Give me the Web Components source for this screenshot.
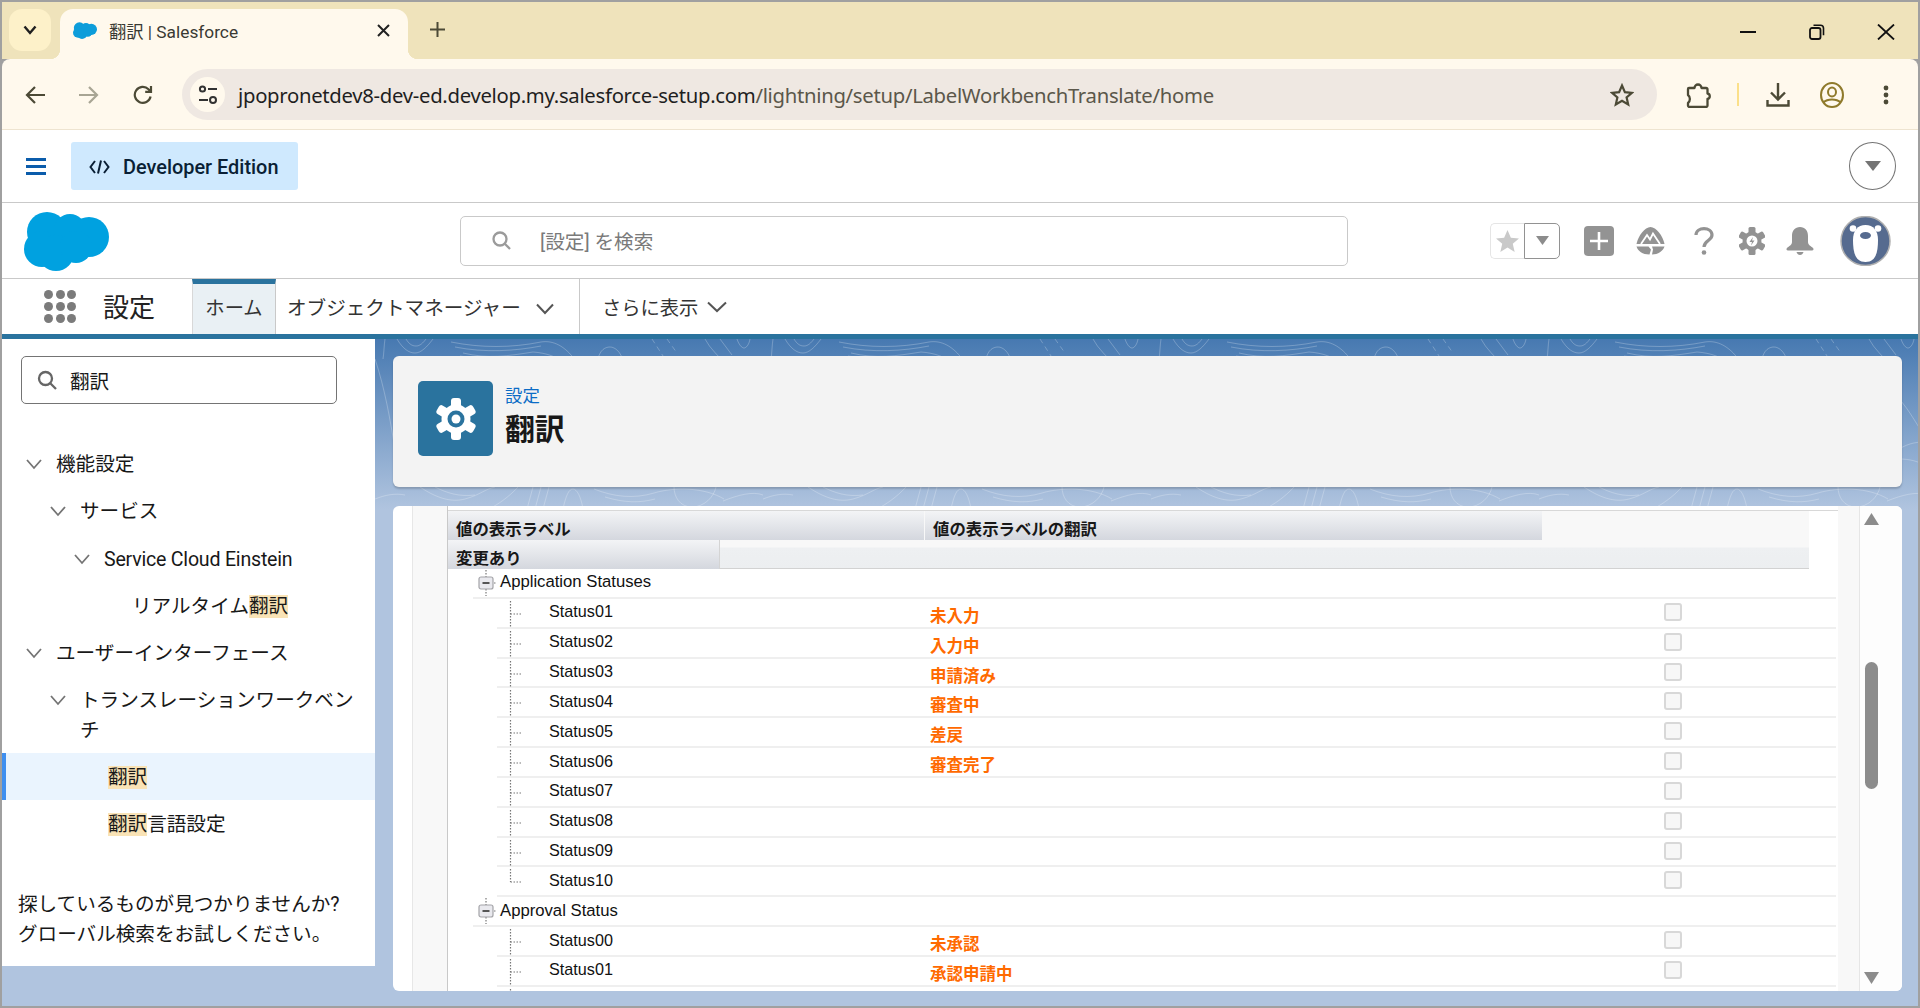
<!DOCTYPE html>
<html lang="ja">
<head>
<meta charset="utf-8">
<title>翻訳 | Salesforce</title>
<style>
  html, body { margin: 0; height: 100%; background: #a0a0a0; }
  body { font-family: Roboto, "Noto Sans CJK JP", sans-serif; color: #181818; overflow: hidden; }
</style>
</head>
<body>
<browser-frame>
  <browser-tabs></browser-tabs>
  <browser-toolbar></browser-toolbar>
  <sf-appbar></sf-appbar>
  <sf-header></sf-header>
  <sf-nav></sf-nav>
  <setup-body>
    <setup-sidebar slot="side"></setup-sidebar>
    <page-head></page-head>
    <label-table></label-table>
  </setup-body>
</browser-frame>

<script>
// every element is just a template in an open shadow root
function define(tag, html, init) {
  const tpl = document.createElement('template');
  tpl.innerHTML = html;
  customElements.define(tag, class extends HTMLElement {
    constructor() {
      super();
      this.attachShadow({ mode: 'open' }).appendChild(tpl.content.cloneNode(true));
      this.ready = false;
    }
    connectedCallback() {
      if (init && !this.ready) { this.ready = true; init(this, this.shadowRoot); }
    }
  });
}

const cloud = `<circle cx="23" cy="21" r="20"/><circle cx="46" cy="19" r="16"/><circle cx="65" cy="26" r="20"/><circle cx="18" cy="38" r="18"/><circle cx="32" cy="42" r="18"/><circle cx="52" cy="36" r="16"/>`;

define('browser-frame', `
<style>
  :host { display: flex; flex-direction: column; box-sizing: border-box; height: 1008px; padding: 2px; background: #a0a0a0; }
</style>
<slot></slot>`);

define('browser-tabs', `
<style>
  :host { display: flex; height: 57px; box-sizing: border-box; padding: 7px 0 0 7px; background: #efe3bb; align-items: flex-start; color: #1f1f1f; }
  .list { width: 42px; height: 42px; border-radius: 13px; background: #fdf1c9; display: flex; align-items: center; justify-content: center; }
  .tab { position: relative; box-sizing: border-box; width: 348px; height: 50px; margin-left: 9px; border-radius: 13px 13px 0 0; background: #fff9ed; display: flex; align-items: center; padding: 0 18px 7px 13px; font-size: 17.300px; color: #3a3a33; }
  .tab::before, .tab::after { content: ""; position: absolute; bottom: 0; width: 10px; height: 10px; }
  .tab::before { left: -10px; background: radial-gradient(circle at 0 0, transparent 10px, #fff9ed 10.5px); }
  .tab::after { right: -10px; background: radial-gradient(circle at 100% 0, transparent 10px, #fff9ed 10.5px); }
  .tab span { flex: 1; margin-left: 12px; }
  .plus { margin-left: 22px; margin-top: 13px; }
  .win { margin-left: auto; display: flex; align-items: center; padding-right: 23px; height: 45px; }
</style>
<div class="list"><svg width="14" height="10" viewBox="0 0 14 10"><path d="M1.5 1.5 7 8l5.5-6.5" fill="none" stroke="#1f1f1f" stroke-width="2.4"/></svg></div>
<div class="tab">
  <svg width="24" height="17" viewBox="0 0 85 60" fill="#0d9dda">${cloud}</svg>
  <span>翻訳 | Salesforce</span>
  <svg width="13" height="13" viewBox="0 0 13 13"><path d="M1 1l11 11M12 1L1 12" stroke="#222" stroke-width="2"/></svg>
</div>
<svg class="plus" width="15" height="15" viewBox="0 0 15 15"><path d="M7.5 0v15M0 7.5h15" stroke="#4c4a36" stroke-width="2"/></svg>
<div class="win">
  <svg width="16" height="4" viewBox="0 0 16 4" style="margin-right:53px"><path d="M0 2h16" stroke="#111" stroke-width="2"/></svg>
  <svg width="16" height="16" viewBox="0 0 16 16" style="margin-right:52px"><rect x="1" y="4" width="10.5" height="11" rx="2" fill="none" stroke="#111" stroke-width="1.8"/><path d="M4.5 1.2h7a3 3 0 0 1 3 3v7" fill="none" stroke="#111" stroke-width="1.6"/></svg>
  <svg width="18" height="16" viewBox="0 0 18 16"><path d="M1 0.5l16 15M17 0.5l-16 15" stroke="#111" stroke-width="1.8"/></svg>
</div>`);

define('browser-toolbar', `
<style>
  :host { display: flex; height: 71px; box-sizing: border-box; padding: 10px 0 9px 23px; background: #fff9ed; border-bottom: 1px solid #eee4d0; border-radius: 8px 8px 0 0; align-items: center; color: #4c4a36; }
  svg { flex: none; }
  .omni { box-sizing: border-box; width: 1475px; height: 51px; margin-left: 29px; border-radius: 26px; background: #efe8e2; display: flex; align-items: center; padding: 0 23px 0 8px; font-size: 20.3px; white-space: nowrap; }
  .tune { width: 35px; height: 35px; border-radius: 50%; background: #fff9ed; display: flex; align-items: center; justify-content: center; margin-right: 13px; flex: none; }
  .url { flex: 1; color: #1f1f1f; font-family: "Noto Sans", "Noto Sans CJK JP", sans-serif; letter-spacing: -.29px; }
  .url i { font-style: normal; color: #5b574a; }
  .sep { width: 2px; height: 23px; background: #fbe08a; margin: 0 27px 0 26px; }
</style>
<svg width="21" height="20" viewBox="0 0 21 20"><path d="M20 10H3M10 2l-8 8 8 8" fill="none" stroke="#4c4a36" stroke-width="2.2"/></svg>
<svg width="21" height="20" viewBox="0 0 21 20" style="margin-left:32px"><path d="M1 10h17M11 2l8 8-8 8" fill="none" stroke="#a8a594" stroke-width="2.2"/></svg>
<svg width="20" height="20" viewBox="0 0 20 20" style="margin-left:34px"><path d="M17.6 11.5A8 8 0 1 1 15.5 4.2L18 6.6M18 1v5.8h-5.8" fill="none" stroke="#4c4a36" stroke-width="2.2"/></svg>
<div class="omni">
  <div class="tune"><svg width="20" height="20" viewBox="0 0 20 20" fill="none" stroke="#333" stroke-width="2"><circle cx="4.5" cy="4" r="2.6"/><path d="M10 4h9M1 15h9"/><circle cx="15" cy="15" r="3"/></svg></div>
  <span class="url">jpopronetdev8-dev-ed.develop.my.salesforce-setup.com<i>/lightning/setup/LabelWorkbenchTranslate/home</i></span>
  <svg width="24" height="24" viewBox="0 0 24 24"><path d="M12 2.5l2.9 6.6 7.1.7-5.4 4.7 1.6 7-6.2-3.7-6.2 3.7 1.6-7L2 9.8l7.1-.7z" fill="none" stroke="#4c4a36" stroke-width="2.2"/></svg>
</div>
<svg width="25" height="26" viewBox="0 0 25 26" style="margin-left:29px"><path d="M3 6h5.500a3.500 3.500 0 0 1 7 0H20a1.500 1.500 0 0 1 1.500 1.500v4a2.800 2.800 0 0 1 0 5.500V23.500a1.500 1.500 0 0 1-1.500 1.500H3.500a1.500 1.500 0 0 1-1.500-1.500V21c2.500-2 2.500-6 0-8V7a1 1 0 0 1 1-1z" fill="none" stroke="#4c4a36" stroke-width="2.300" stroke-linejoin="round"/></svg>
<div class="sep"></div>
<svg width="24" height="25" viewBox="0 0 24 25"><path d="M12 1v16M5 10.500l7 7 7-7M1.500 18v5.500h21V18" fill="none" stroke="#4c4a36" stroke-width="2.400"/></svg>
<svg width="24" height="26" viewBox="0 0 24 26" style="margin-left:30px" fill="none" stroke="#8f7a2b" stroke-width="2"><ellipse cx="12" cy="13" rx="11" ry="12"/><ellipse cx="12" cy="10" rx="4" ry="4.500"/><path d="M3.500 20.500c4-4 13-4 17 0"/></svg>
<svg width="6" height="20" viewBox="0 0 6 20" style="margin-left:39px" fill="#4c4a36"><circle cx="3" cy="3" r="2.400"/><circle cx="3" cy="10" r="2.400"/><circle cx="3" cy="17" r="2.400"/></svg>`);

define('sf-appbar', `
<style>
  :host { display: flex; height: 73px; box-sizing: border-box; border-bottom: 1px solid #c9c9c9; background: #fff; align-items: center; padding: 0 22px 0 24px; }
  .menu { width: 20px; height: 17px; }
  .edition { display: flex; align-items: center; width: 227px; height: 48px; box-sizing: border-box; margin-left: 25px; padding: 2px 0 0 18px; background: #cfe9fe; border-radius: 3px; font-size: 19.900px; font-weight: 500; color: #0a1f35; }
  .edition svg { margin-right: 13px; }
  .drop { margin-left: auto; width: 47px; height: 48px; box-sizing: border-box; border: 1px solid #747474; border-radius: 50%; display: flex; align-items: center; justify-content: center; }
</style>
<svg class="menu" viewBox="0 0 20 17" fill="#0b5cab"><rect width="20" height="3"/><rect y="7" width="20" height="3"/><rect y="14" width="20" height="3"/></svg>
<div class="edition"><svg width="21" height="14" viewBox="0 0 21 14" fill="none" stroke="#0a1f35" stroke-width="2"><path d="M6 1L1.500 7 6 13M15 1l4.500 6-4.500 6M12 0.500L9 13.500"/></svg>Developer Edition</div>
<div class="drop"><svg width="16" height="10" viewBox="0 0 16 10"><path d="M0 0h16l-8 10z" fill="#747474"/></svg></div>`);

const gearTeeth = [0, 60, 120, 180, 240, 300];

define('sf-header', `
<style>
  :host { display: flex; height: 76px; box-sizing: border-box; border-bottom: 1px solid #c9c9c9; background: #fff; align-items: center; padding-left: 22px; }
  .logo { flex: none; }
  .search { box-sizing: border-box; width: 888px; height: 50px; margin-left: 351px; border: 1px solid #c9c9c9; border-radius: 5px; display: flex; align-items: center; padding-left: 31px; color: #7a7a7a; font-size: 19.600px; }
  .search svg { margin-right: 29px; }
  .fav { display: flex; width: 70px; height: 36px; margin-left: 142px; box-sizing: border-box; }
  .fav div { display: flex; align-items: center; justify-content: center; box-sizing: border-box; height: 36px; }
  .fav .star { width: 34px; border: 1px solid #e5e5e5; border-right: 0; border-radius: 5px 0 0 5px; }
  .fav .arr { width: 36px; border: 1px solid #929292; border-left-color: #929292; border-radius: 0 5px 5px 0; }
  .ic { flex: none; }
  .avatar { margin-left: 26px; flex: none; }
</style>
<svg class="logo" width="85" height="60" viewBox="0 0 85 60" fill="#00a1e0">${cloud}</svg>
<div class="search"><svg width="19" height="19" viewBox="0 0 19 19" fill="none" stroke="#9b9b9b" stroke-width="2.300"><circle cx="8" cy="8" r="6.500"/><path d="M12.500 12.500l5.500 5.500"/></svg><span>[設定] を検索</span></div>
<div class="fav">
  <div class="star"><svg width="23" height="22" viewBox="0 0 24 23"><path d="M12 0l3.500 8 8.500.8-6.500 5.600 2 8.600L12 18.400 4.500 23l2-8.600L0 8.800 8.500 8z" fill="#c9c9c9"/></svg></div>
  <div class="arr"><svg width="13" height="9" viewBox="0 0 13 9"><path d="M0 0h13L6.500 9z" fill="#8c8c8c"/></svg></div>
</div>
<svg class="ic" style="margin-left:24px" width="30" height="30" viewBox="0 0 30 30"><rect width="30" height="30" rx="4" fill="#939393"/><path d="M15 6v18M6 15h18" stroke="#fff" stroke-width="2.600"/></svg>
<svg class="ic" style="margin-left:22px" width="29" height="28" viewBox="0 0 29 28"><path d="M14.500 0C20 0 27 9 28.500 17H.5C2 9 9 0 14.500 0z" fill="#939393"/><path d="M.5 19.500h12l2.500 3-1.500 5C6.500 27.500 2 24 .5 19.500zM16 19.500h12.500C27 24 22 27.500 16 27.500l1-5z" fill="#939393"/><path d="M5 17l6-9 3 4.500 3-6L24 17" fill="none" stroke="#fff" stroke-width="1.800"/></svg>
<svg class="ic" style="margin-left:29px" width="20" height="28" viewBox="0 0 20 28"><path d="M2 8C2-.5 18-.5 18 8c0 5.500-8 5.500-8 12" fill="none" stroke="#939393" stroke-width="3.200"/><circle cx="10" cy="25.500" r="2.300" fill="#939393"/></svg>
<svg class="ic" style="margin-left:25px" width="26" height="28" viewBox="-13 -14 26 28"><g fill="#939393">${gearTeeth.map(a => `<rect x="-3.500" y="-14" width="7" height="8" rx="1.500" transform="rotate(${a})"/>`).join('')}<circle r="9.500"/></g><circle r="5.500" fill="#fff"/><path d="M1-4L-2.500 1H0L-1 4.500 2.500-.5H0z" fill="#939393"/></svg>
<svg class="ic" style="margin-left:21px" width="28" height="28" viewBox="0 0 28 28" fill="#939393"><path d="M14 0c5 0 8 3.500 8 9v6c0 3 3 4 5 6 1 1 .5 2.500-1 2.500H2C.5 23.500 0 22 1 21c2-2 5-3 5-6V9c0-5.500 3-9 8-9z"/><path d="M10.500 25h7c-.5 2-2 3-3.500 3s-3-1-3.500-3z"/></svg>
<svg class="avatar" width="51" height="50" viewBox="0 0 51 50"><circle cx="25.500" cy="25" r="24.500" fill="#566b8f" stroke="#b0b0b0" stroke-width="1.500"/><circle cx="13" cy="12.500" r="3.300" fill="#fff"/><circle cx="38" cy="12.500" r="3.300" fill="#fff"/><path d="M25.500 9c8 0 12.500 6 12.500 15 0 12-2 22-12.500 22S13 36 13 24c0-9 4.500-15 12.500-15z" fill="#fff"/><ellipse cx="25.500" cy="19.500" rx="5.500" ry="3.500" fill="#566b8f"/></svg>`);

define('sf-nav', `
<style>
  :host { display: flex; height: 55px; background: #fff; align-items: stretch; padding-left: 42px; font-size: 19.600px; white-space: nowrap; }
  .apps { align-self: center; display: grid; grid-template-columns: repeat(3, 9px); gap: 3px 2.500px; }
  .apps i { width: 9px; height: 9px; border-radius: 50%; background: #7b7b7b; }
  .title { width: 89px; margin: -3px 0 0 27px; font-size: 26px; align-self: center; color: #222; }
  .home { box-sizing: border-box; width: 84px; display: flex; align-items: center; justify-content: center; padding-bottom: 5px; background: #e9f0f4; border-top: 5px solid #2a739e; border-left: 1px solid #d8d8d8; border-right: 1px solid #c9c9c9; color: #333; font-size: 19.300px; }
  .item { display: flex; align-items: center; color: #333; }
  .om { box-sizing: border-box; width: 304px; padding-left: 11px; border-right: 1px solid #c9c9c9; }
  .om svg { margin: 5px 0 0 15px; }
  .more { padding-left: 22px; font-size: 19.300px; }
  .more svg { margin-left: 9px; }
</style>
<div class="apps"><i></i><i></i><i></i><i></i><i></i><i></i><i></i><i></i><i></i></div>
<div class="title">設定</div>
<div class="home">ホーム</div>
<div class="item om">オブジェクトマネージャー<svg width="18" height="12" viewBox="0 0 18 12"><path d="M1 1.500l8 8.500 8-8.500" fill="none" stroke="#555" stroke-width="2"/></svg></div>
<div class="item more">さらに表示<svg width="20" height="12" viewBox="0 0 20 12"><path d="M1 1.500l9 8.500 9-8.500" fill="none" stroke="#555" stroke-width="2"/></svg></div>`);

define('setup-body', `
<style>
  :host { display: flex; flex: 1; min-height: 0; position: relative; border-top: 5px solid #2a739e; background: linear-gradient(#4779b1 0, #b0c4df 170px); }
  .side { width: 373px; flex: none; background: #b0c4df; position: relative; z-index: 1; }
  .main { flex: 1; position: relative; z-index: 1; min-width: 0; padding: 17px 16px 0 18px; display: flex; flex-direction: column; gap: 19px; }
  .topo { position: absolute; left: 373px; top: 0; width: calc(100% - 373px); height: 200px; }
</style>
<svg class="topo">
  <defs>
    <pattern id="topo" width="388" height="200" patternUnits="userSpaceOnUse">
      <g fill="none" stroke="#fff" stroke-opacity=".24" stroke-width="1">
        <path d="M22 0c6 10 12 14 18 14s12-6 18-14M31 0c3 5 6 7 10 7s7-3 10-7"/>
        <path d="M76 3c30 6 60 6 90 0 12-2 24 4 34 18M80 8c30 6 60 4 86-1M88 14c25 6 45 3 70-1 14 1 24 5 32 11"/>
        <path d="M223 20c2-9 7-12 12-12s11 5 13 14M330 0c5 10 15 18 20 25M345 0l12 16M362 0c2 6 5 9 7 9s5-3 6-9M8 20c1-6 1-14 2-20"/>
        <path d="M277 0l13 20M292 0l10 14M85 17l30 4" stroke-dasharray="5 4"/>
        <path d="M45 148c15 10 30 16 45 12s20-10 30-12M60 148c12 6 24 10 40 8M114 170c8-4 20-12 29-22"/>
        <path d="M152 170l6-22M160 170l6-22M168 170l6-22M188 170c3-14 6-20 10-20s8 8 10 20"/>
        <path d="M219 150c20 8 40 10 60 4s50-6 70 6M230 158c20 6 35 6 50 2M299 148c0 10 6 20 18 20s22-10 24-20M348 162c15-6 30-10 40-6M0 160c10-4 20-6 30-4"/>
        <path d="M360 60c10 10 20 30 28 40M360 110c10-6 20-8 28-6M360 120c10 0 20 2 28 8M0 20c10 30 15 60 20 90"/>
      </g>
    </pattern>
  </defs>
  <rect width="100%" height="200" fill="url(#topo)"/>
</svg>
<div class="side"><slot name="side"></slot></div>
<div class="main"><slot></slot></div>`);

// one row of the setup tree
define('tree-item', `
<style>
  :host { display: flex; box-sizing: border-box; padding: 10px 16px 7px var(--indent, 0); line-height: 30px; font-size: 19.600px; color: #181818; }
  :host([current]) { background: #eaf4fe; box-shadow: inset 4px 0 #3f8fef; }
  svg { flex: none; margin: 9px 14px 0 0; }
  ::slotted(mark) { background: #f9e3b6; color: inherit; }
</style>
<svg width="16" height="11" viewBox="0 0 16 11"><path d="M1 1l7 8 7-8" fill="none" stroke="#747474" stroke-width="1.800"/></svg>
<span><slot></slot></span>`, (el, root) => {
  el.style.setProperty('--indent', el.getAttribute('indent') + 'px');
  if (el.hasAttribute('leaf')) root.querySelector('svg').remove();
});

define('setup-sidebar', `
<style>
  :host { display: block; box-sizing: border-box; height: 627px; background: #fff; padding-top: 17px; font-size: 19.600px; }
  .find { box-sizing: border-box; width: 316px; height: 48px; margin-left: 19px; border: 1px solid #747474; border-radius: 5px; display: flex; align-items: center; padding-left: 15px; }
  .find svg { margin-right: 13px; }
  .tree { margin-top: 36.500px; }
  .help { margin: 43px 0 0 16px; line-height: 30px; }
  mark { background: #f9e3b6; color: inherit; }
</style>
<div class="find"><svg width="20" height="20" viewBox="0 0 20 20" fill="none" stroke="#666" stroke-width="2.300"><circle cx="8.500" cy="8.500" r="6.500"/><path d="M13 13l6 6"/></svg><span>翻訳</span></div>
<div class="tree">
  <tree-item indent="24" style="padding-top:9px;padding-bottom:8px">機能設定</tree-item>
  <tree-item indent="48" style="padding-top:9px;padding-bottom:8px">サービス</tree-item>
  <tree-item indent="72"><span style="letter-spacing:-.22px">Service Cloud Einstein</span></tree-item>
  <tree-item indent="130" leaf>リアルタイム<mark>翻訳</mark></tree-item>
  <tree-item indent="24">ユーザーインターフェース</tree-item>
  <tree-item indent="48">トランスレーションワークベンチ</tree-item>
  <tree-item indent="106" leaf current><mark>翻訳</mark></tree-item>
  <tree-item indent="106" leaf><mark>翻訳</mark>言語設定</tree-item>
</div>
<div class="help">探しているものが見つかりませんか?<br>グローバル検索をお試しください。</div>`);

define('page-head', `
<style>
  :host { display: flex; flex: none; box-sizing: border-box; height: 131px; padding: 25px 0 0 25px; background: #f3f3f3; border-radius: 6px; box-shadow: 0 2px 2px rgba(0,0,0,.18); }
  .icon { width: 75px; height: 75px; border-radius: 5px; background: #2a739e; display: flex; align-items: center; justify-content: center; flex: none; }
  .txt { margin-left: 12px; }
  a { display: block; font-size: 17.400px; line-height: 30px; color: #0b6cc6; }
  h1 { margin: .7px 0 0; font-size: 29.800px; line-height: 36px; font-weight: 700; color: #181818; }
</style>
<div class="icon"><svg width="40" height="42" viewBox="-20 -21 40 42"><g fill="#fff">${gearTeeth.map(a => `<rect x="-5" y="-21" width="10" height="12" rx="3" transform="rotate(${a})"/>`).join('')}<circle r="14.500"/></g><circle r="8.500" fill="#2a739e"/><circle r="4.500" fill="#fff"/></svg></div>
<div class="txt"><a>設定</a><h1>翻訳</h1></div>`);

define('tree-group', `
<style>
  :host { display: flex; box-sizing: border-box; height: 29.850px; margin-left: 25px; width: 1363px; border-bottom: 2px solid #efefef; align-items: center; font: 16.700px "Liberation Sans", "Noto Sans CJK JP", sans-serif; color: #111; }
  svg { flex: none; margin: 0 3px 0 5px; }
  span { margin-top: -1px; }
</style>
<svg width="19" height="28" viewBox="0 0 19 28"><path d="M8 1v7M8 20v7M16 14h3" stroke="#777" stroke-width="1.200" stroke-dasharray="1.500 1.500"/><rect x="1" y="8" width="14" height="12" rx="2" fill="#e9e9ee" stroke="#a4a4a8" stroke-width="1.200"/><path d="M4.500 14h7" stroke="#555" stroke-width="2"/></svg>
<span><slot></slot></span>`);

define('tree-leaf', `
<style>
  :host { display: grid; grid-template-columns: 52px 381px 734px 18px; box-sizing: border-box; height: 29.850px; margin-left: 49px; width: 1339px; border-bottom: 2px solid #efefef; align-items: center; font: 16.200px "Liberation Sans", "Noto Sans CJK JP", sans-serif; color: #111; }
  .link { height: 28px; }
  .val { font-weight: 700; font-size: 16.500px; color: #ff6a00; padding-top: 4px; }
  .box { box-sizing: border-box; width: 18px; height: 18px; margin-top: -2px; border: 2px solid #d8d8d8; border-radius: 3px; background: #f7f7f7; }
  .name { margin-top: -2px; }
</style>
<svg class="link" width="52" height="28" viewBox="0 0 52 28" fill="none" stroke="#777" stroke-width="1.200" stroke-dasharray="1.500 1.500"><path class="v" d="M13.500 2v26"/><path d="M13.500 15h11"/></svg>
<div class="name"></div>
<div class="val"></div>
<div class="box"></div>`, (el, root) => {
  root.querySelector('.name').textContent = el.getAttribute('name') || '';
  root.querySelector('.val').textContent = el.getAttribute('value') || '';
  if (el.hasAttribute('last')) root.querySelector('.v').setAttribute('d', 'M13.500 2v13');
});

// the last row of the second group only peeks in at the card's bottom edge
const groups = [
  ['Application Statuses', [
    ['Status01', '未入力'], ['Status02', '入力中'], ['Status03', '申請済み'], ['Status04', '審査中'],
    ['Status05', '差戻'], ['Status06', '審査完了'], ['Status07'], ['Status08'], ['Status09'], ['Status10']
  ]],
  ['Approval Status', [['Status00', '未承認'], ['Status01', '承認申請中'], ['']]]
];

define('label-table', `
<style>
  :host { display: flex; flex: none; height: 485px; background: #fff; border-radius: 6px; overflow: hidden; font: 700 16.400px "Liberation Sans", "Noto Sans CJK JP", sans-serif; color: #181818; }
  .g1 { width: 19px; flex: none; }
  .g2 { box-sizing: border-box; width: 36px; flex: none; background: #f8f8f8; border-left: 1px solid #e7e7e7; border-right: 1px solid #c9c9c9; }
  .content { width: 1390px; flex: none; height: 485px; overflow: hidden; padding-top: 4px; box-sizing: border-box; }
  .head { border-top: 1px solid #d8d8d8; width: 1390px; }
  .r1, .r2 { display: flex; width: 1361px; }
  .r1 { height: 29px; background: #f8f8f8; }
  .r2 { height: 29px; box-sizing: border-box; background: linear-gradient(#f8f8f8 0, #f8f8f8 7px, #eef0f2 8px, #eceef0 100%); border-bottom: 1px solid #d2d2d2; }
  .th { box-sizing: border-box; height: 29px; padding: 5px 0 0 8px; line-height: 26px; background: linear-gradient(#f3f4f6, #d4d7de); }
  .a { width: 476px; } .b { width: 617px; margin-left: 1px; } .c { width: 272px; border-right: 1px solid #d4d4d4; }
  .bar { box-sizing: border-box; width: 64px; flex: none; display: flex; background: linear-gradient(90deg, #f8f8f8 0 21px, #e6e6e6 21px 22px, #fdfdfd 22px); position: relative; }
  .up, .down { position: absolute; left: 26px; }
  .up { top: 7px; } .down { bottom: 7px; }
  .thumb { position: absolute; left: 27px; top: 156px; width: 13px; height: 127px; border-radius: 7px; background: #8c8c8c; }
</style>
<div class="g1"></div>
<div class="g2"></div>
<div class="content">
  <div class="head">
    <div class="r1"><div class="th a">値の表示ラベル</div><div class="th b">値の表示ラベルの翻訳</div></div>
    <div class="r2"><div class="th c">変更あり</div></div>
  </div>
  <div id="rows"></div>
</div>
<div class="bar">
  <svg class="up" width="15" height="12" viewBox="0 0 15 12"><path d="M7.500 0L15 12H0z" fill="#8c8c8c"/></svg>
  <div class="thumb"></div>
  <svg class="down" width="15" height="12" viewBox="0 0 15 12"><path d="M0 0h15L7.500 12z" fill="#8c8c8c"/></svg>
</div>`, (el, root) => {
  const rows = root.getElementById('rows');
  for (const [label, leaves] of groups) {
    const g = document.createElement('tree-group');
    g.textContent = label;
    rows.append(g);
    leaves.forEach(([name, value], i) => {
      const leaf = document.createElement('tree-leaf');
      leaf.setAttribute('name', name);
      if (value) leaf.setAttribute('value', value);
      if (i === leaves.length - 1 && leaves.length === 10) leaf.setAttribute('last', '');
      rows.append(leaf);
    });
  }
});
</script>
</body>
</html>
